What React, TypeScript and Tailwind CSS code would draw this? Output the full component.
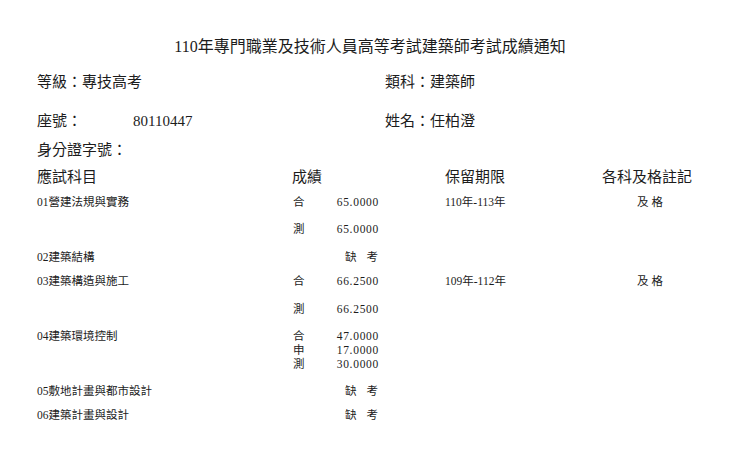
type Line = {
  mt: string;
  subject?: string;
  label?: string;
  score?: string;
  absent?: boolean;
  period?: string;
  remark?: string;
};

// one entry per printed line of the score table
const lines: Line[] = [
  { mt: "mt-[8px]", subject: "01營建法規與實務", label: "合", score: "65.0000", period: "110年-113年", remark: "及 格" },
  { mt: "mt-[13px]", label: "測", score: "65.0000" },
  { mt: "mt-[14px]", subject: "02建築結構", absent: true },
  { mt: "mt-[10px]", subject: "03建築構造與施工", label: "合", score: "66.2500", period: "109年-112年", remark: "及 格" },
  { mt: "mt-[14px]", label: "測", score: "66.2500" },
  { mt: "mt-[13px]", subject: "04建築環境控制", label: "合", score: "47.0000" },
  { mt: "mt-0", label: "申", score: "17.0000" },
  { mt: "mt-0", label: "測", score: "30.0000" },
  { mt: "mt-[13px]", subject: "05敷地計畫與都市設計", absent: true },
  { mt: "mt-[10px]", subject: "06建築計畫與設計", absent: true },
];

const cols = "grid grid-cols-[256px_20px_66px_66px_115px_1fr] pl-[37px]";

export default function App() {
  return (
    <div
      className="w-[740px] h-[470px] bg-white text-[#1c1c1c] overflow-hidden"
      style={{ fontFamily: '"Liberation Serif", "Noto Sans CJK TC", serif' }}
    >
      {/* Title */}
      <div className="pt-[37px]">
        <div className="h-[20px] flex items-center justify-center text-[16px] leading-[20px]">
          110年專門職業及技術人員高等考試建築師考試成績通知
        </div>
      </div>

      {/* Candidate info */}
      <div className="mt-[15px] h-[20px] flex items-center text-[15px] leading-[20px] pl-[37px]">
        <span className="w-[348px]">等級：專技高考</span>
        <span>類科：建築師</span>
      </div>
      <div className="mt-[19px] h-[20px] flex items-center text-[15px] leading-[20px] pl-[37px]">
        <span className="w-[96px]">座號：</span>
        <span className="w-[252px]">80110447</span>
        <span>姓名：任柏澄</span>
      </div>
      <div className="mt-[9px] h-[20px] flex items-center text-[15px] leading-[20px] pl-[37px]">
        身分證字號：
      </div>

      {/* Table header */}
      <div className={`${cols} mt-[7px] h-[20px] items-center text-[15px] leading-[20px]`}>
        <span>應試科目</span>
        <span className="col-span-3 -ml-[1px]">成績</span>
        <span>保留期限</span>
        <span className="text-center -ml-[6px]">各科及格註記</span>
      </div>

      {/* Table rows */}
      {lines.map((l, i) => (
        <div key={i} className={`${cols} ${l.mt} h-[14px] items-center text-[11.5px] leading-[14px]`}>
          <span>{l.subject ?? ""}</span>
          {l.absent ? (
            <span className="col-span-2 text-right pr-[1px] tracking-[10px] -mr-[10px]">缺考</span>
          ) : (
            <>
              <span>{l.label ?? ""}</span>
              <span className="text-right tracking-[0.7px]">{l.score ?? ""}</span>
            </>
          )}
          <span></span>
          <span>{l.period ?? ""}</span>
          <span className="text-center">{l.remark ?? ""}</span>
        </div>
      ))}
    </div>
  );
}
